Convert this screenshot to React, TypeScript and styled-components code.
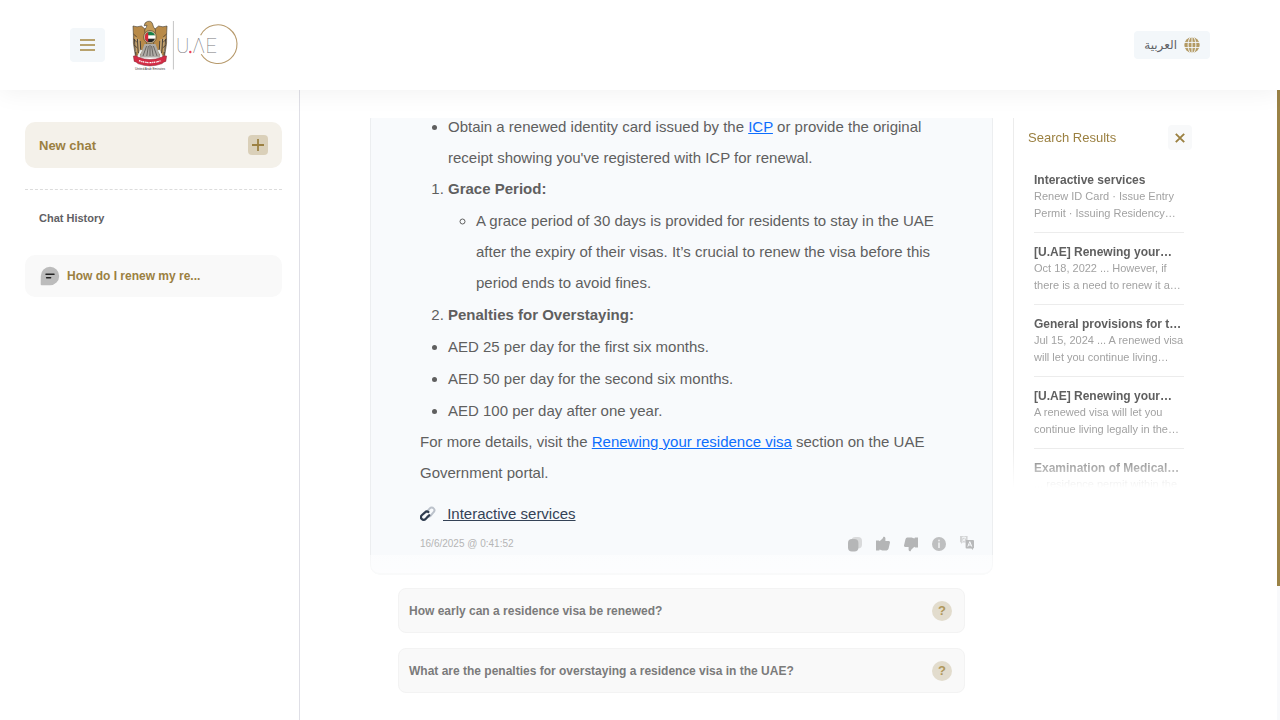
import React from 'react';
import styled, { createGlobalStyle } from 'styled-components';

const gold = '#9b8041';
const sans = '"Liberation Sans", Arial, sans-serif';

const GlobalStyle = createGlobalStyle`
  *, *::before, *::after { box-sizing: border-box; }
  body {
    margin: 0;
    background: #fff;
    color: #5f5f5f;
    font-family: ${sans};
  }
  button { font-family: inherit; border: 0; padding: 0; margin: 0; cursor: pointer; }
  svg { display: block; flex: none; }
`;

const Page = styled.div`
  display: flex;
  flex-direction: column;
  height: 100vh;
  overflow: hidden;
`;

const Header = styled.header`
  position: relative;
  z-index: 2;
  flex: none;
  display: flex;
  align-items: center;
  height: 90px;
  padding: 0 70px;
  background: #fff;
  box-shadow: 0 2px 24px rgba(0, 0, 0, 0.06);
`;

const MenuButton = styled.button`
  display: flex;
  align-items: center;
  justify-content: center;
  width: 35px;
  height: 34px;
  margin-right: 26px;
  border-radius: 4px;
  background: #f3f7fa;
`;

const LogoLink = styled.a`
  display: block;
  margin-right: auto;
`;

const LanguageButton = styled.button`
  display: flex;
  align-items: center;
  gap: 7px;
  height: 28px;
  padding: 0 10px;
  border-radius: 4px;
  background: #f3f7fa;
  color: #5f6367;
  font-family: "DejaVu Sans", sans-serif;
  font-size: 12px;
  font-weight: 400;
  line-height: 16px;
`;

const Body = styled.div`
  flex: 1;
  display: flex;
  min-height: 0;
`;

const Sidebar = styled.aside`
  flex: none;
  width: 300px;
  padding: 32px 17px 0 25px;
  border-right: 1px solid #dfdfe6;
`;

const NewChat = styled.button`
  display: flex;
  align-items: center;
  justify-content: space-between;
  width: 100%;
  height: 46px;
  padding: 0 14px;
  border-radius: 10px;
  background: #f4f1ea;
  color: ${gold};
  font-size: 13px;
  font-weight: 700;
`;

const Divider = styled.hr`
  margin: 21px 0;
  border: 0;
  border-top: 1px dashed #dcdcdc;
`;

const HistoryTitle = styled.h2`
  margin: 0 0 30px;
  padding-left: 14px;
  color: #5f6064;
  font-size: 11px;
  line-height: 14px;
  font-weight: 700;
`;

const HistoryItem = styled.button`
  display: flex;
  align-items: center;
  gap: 7px;
  width: 100%;
  height: 42px;
  padding: 0 15px;
  border-radius: 10px;
  background: #f9f9f9;
  color: ${gold};
  font-size: 12px;
  font-weight: 700;
`;

const Main = styled.main`
  flex: 1;
  display: flex;
  gap: 20px;
  min-width: 0;
  padding: 28px 84px 27px 70px;
`;

const ChatColumn = styled.div`
  flex: 1;
  display: flex;
  flex-direction: column;
  min-width: 0;
`;

const Scroller = styled.div`
  position: relative;
  flex: 1;
  display: flex;
  flex-direction: column;
  justify-content: flex-end;
  min-height: 0;
  overflow: hidden;
  border-radius: 0 0 10px 10px;

  &::after {
    content: "";
    position: absolute;
    inset: auto 0 0;
    height: 20px;
    background: linear-gradient(rgba(255, 255, 255, 0.5), rgba(255, 255, 255, 0.7));
  }
`;

const Answer = styled.article`
  padding: 0 17px 18px 49px;
  border: 1px solid #eceef0;
  border-bottom-width: 2px;
  border-radius: 10px;
  background: #f8fafc;
  font-size: 15px;
  line-height: 31px;

  ul, ol { margin: 0 26px 0 0; padding-left: 28px; }
  ol { margin-bottom: 1px; }
  li + li { margin-top: 1px; }
  li > ul { margin: 1px 0 0; }
  p { margin: 0 26px 0 0; }
`;

const InlineLink = styled.a`
  color: #0d6efd;
  text-decoration: underline;
`;

const ServiceRow = styled.div`
  display: flex;
  align-items: center;
  gap: 7px;
  height: 32px;
  margin-top: 9px;
`;

const ServiceLink = styled.a`
  color: #344256;
  white-space: pre;
  text-decoration: underline;
`;

const AnswerFooter = styled.footer`
  display: flex;
  align-items: center;
  justify-content: space-between;
  height: 22px;
  margin-top: 4px;
`;

const Timestamp = styled.time`
  color: #b5b5b5;
  font-size: 10px;
  line-height: 12px;
`;

const Actions = styled.div`
  display: flex;
  gap: 12px;
`;

const ActionButton = styled.button`
  width: 16px;
  height: 16px;
  background: none;
`;

const Suggestions = styled.div`
  flex: none;
  display: grid;
  gap: 15px;
  margin: 13px 28px 0;
`;

const Suggestion = styled.button`
  display: flex;
  align-items: center;
  justify-content: space-between;
  height: 45px;
  padding: 0 12px 0 10px;
  border: 1px solid #f3f3f3;
  border-radius: 8px;
  background: #f9f9f9;
  color: #7b7b7b;
  font-size: 12px;
  font-weight: 700;
  text-align: left;
`;

const QuestionMark = styled.span`
  display: flex;
  align-items: center;
  justify-content: center;
  width: 20px;
  height: 20px;
  border-radius: 50%;
  background: #e2dccd;
  color: #b0985b;
  font-size: 13px;
`;

const Results = styled.aside`
  flex: none;
  width: 180px;
  height: 370px;
  overflow: hidden;
  padding: 7px 1px 0 14px;
  border-left: 1px solid #ececec;
  mask-image: linear-gradient(#000 calc(100% - 40px), transparent);
`;

const ResultsHeader = styled.div`
  display: flex;
  align-items: center;
  justify-content: space-between;
  margin-bottom: 11px;
`;

const ResultsTitle = styled.h2`
  margin: 0;
  color: ${gold};
  font-size: 13px;
  line-height: 16px;
  font-weight: 400;
`;

const CloseButton = styled.button`
  display: flex;
  align-items: center;
  justify-content: center;
  width: 24px;
  height: 25px;
  border-radius: 4px;
  background: #f8f9fa;
`;

const ResultList = styled.ul`
  margin: 0 8px 0 6px;
  padding: 0;
  list-style: none;
`;

const Result = styled.li`
  padding: 11px 0 10px;
  border-bottom: 1px solid #ececec;
`;

const ResultLink = styled.a`
  display: block;
  color: #5f5f5f;
  font-size: 12px;
  line-height: 16px;
  font-weight: 700;
  text-decoration: none;
  white-space: nowrap;
`;

const ResultText = styled.p`
  margin: 0;
  color: #a2a2a2;
  font-size: 11px;
  line-height: 17px;
`;

const ScrollTrack = styled.div`
  flex: none;
  width: 3px;
  background: #f8f9fb;
`;

const ScrollThumb = styled.div`
  height: calc(79% - 2px);
  background: #9a8245;
`;

const MenuIcon = () => (
  <svg width="15" height="12" viewBox="0 0 15 12" aria-hidden="true">
    <path d="M0 1h15M0 6h15M0 11h15" stroke="#a5863f" strokeWidth="1.4" />
  </svg>
);

const Logo = () => (
  <svg width="108" height="52" viewBox="131 18 108 52" role="img" aria-label="UAE government portal">
    <g stroke="#3f3a33" strokeWidth="0.6" strokeLinejoin="round">
      <path d="M145 28 L141.4 25 Q137 26.6 133 25 L133.4 34 L133.4 42 L134.6 50 L135.6 56 L139 53 L141.5 56 L144 46 L150 44 L156 46 L158.5 56 L161 53 L164.4 56 L165.4 50 L166.6 42 L166.6 34 L167 25 Q163 26.6 158.6 25 L155 28 Z" fill="#b88a48" />
      <path d="M144.6 29 Q146.6 26.4 147 24.2 L144.2 24.8 Q144.4 21.2 147.6 20.4 Q151.6 19.6 152.6 23 Q153 26 155.6 29 L153 46 H147 Z" fill="#c39a58" />
    </g>
    <path d="M134.4 38l1.6 16M137.4 38l1 14M140.2 40l.8 14M165.6 38l-1.6 16M162.6 38l-1 14M159.8 40l-.8 14" stroke="#45423f" strokeWidth="1" />
    <path d="M136 36v15M164 36v15M138.8 38l.6 13M161.2 38l-.6 13" stroke="#d9c7a2" strokeWidth="0.8" />
    <path d="M133.4 33l3.4 3M133.4 38l3.4 3M134 44l3.4 3M166.6 33l-3.4 3M166.6 38l-3.4 3M166 44l-3.4 3" stroke="#463b30" strokeWidth="0.8" />
    <path d="M144.5 43h11l5 13.5h-21z" fill="#aeaba6" />
    <path d="M146.6 45l-3.6 10M150 44v11M153.4 45l3.6 10M148.4 45l-1.6 10M151.6 45l1.6 10" stroke="#4a4845" strokeWidth="0.7" />
    <path d="M141.4 49l-3 6M158.6 49l3 6" stroke="#eef4f4" strokeWidth="1.8" />
    <circle cx="150" cy="36" r="6.4" fill="#d6c7a4" stroke="#54442b" strokeWidth="0.7" />
    <clipPath id="shield"><circle cx="150" cy="36" r="5.2" /></clipPath>
    <g clipPath="url(#shield)">
      <path d="M144 30h12v4.4h-12z" fill="#15804a" />
      <path d="M144 34.4h12v3.4h-12z" fill="#fff" />
      <path d="M144 37.8h12v4h-12z" fill="#252525" />
      <path d="M144 30h4.2v12H144z" fill="#d52b3a" />
    </g>
    <path d="M133.4 55q3.2-.8 5 1.2 11.6 4.6 23.2 0 1.8-2 5-1.2l-.8 5.4q-2.6.2-3.6 2.2-12.2 4.6-24.4 0-1-2-3.6-2.2z" fill="#d42c46" stroke="#7c2531" strokeWidth="0.5" />
    <path d="M139 59.6q11 4 22 0" fill="none" stroke="#fff" strokeWidth="1.3" strokeDasharray="1.6 .7 .9 .5" />
    <text x="150" y="69" textAnchor="middle" fontFamily="Liberation Sans" fontSize="3.2" fill="#3f3c39">United Arab Emirates</text>
    <path d="M173.4 20v48.5" stroke="#c4c4c4" strokeWidth="1" />
    <path d="M200.6 34.2A19.3 19.3 0 1 1 201.2 53.2" fill="none" stroke="#b79a6c" strokeWidth="1.1" />
    <g fontFamily="Roboto, Lato, sans-serif" fontWeight="100" fontSize="20" fill="#77777b">
      <text x="176" y="52">U</text>
      <text x="192.3" y="52">Λ</text>
      <text x="205.4" y="52">E</text>
    </g>
    <circle cx="190.3" cy="51" r="1.2" fill="#ec3d5a" />
  </svg>
);

const GlobeIcon = () => (
  <svg width="16" height="16" viewBox="0 0 16 16" aria-hidden="true">
    <circle cx="8" cy="8" r="7.7" fill="#b39a63" />
    <g fill="none" stroke="#f3f7fa" strokeWidth="1">
      <path d="M0 5.4h16M0 10.6h16M8 0v16" />
      <ellipse cx="8" cy="8" rx="3.9" ry="8.4" />
    </g>
  </svg>
);

const PlusIcon = () => (
  <svg width="20" height="20" viewBox="0 0 20 20" aria-hidden="true">
    <rect width="20" height="20" rx="4" fill="#dad0b9" />
    <path d="M10 4v12M4 10h12" stroke="#9b8041" strokeWidth="1.8" />
  </svg>
);

const ChatIcon = () => (
  <svg width="20" height="20" viewBox="0 0 20 20" aria-hidden="true">
    <path d="M10 .8a9.2 9.2 0 1 1 0 18.4H1.6q-1 0-.9-1L.8 10A9.2 9.2 0 0 1 10 .8z" fill="#bcbcbc" />
    <path d="M6 8.2h8M6.6 11.8h4" stroke="#232323" strokeWidth="1.5" strokeLinecap="round" />
  </svg>
);

const ChainIcon = () => (
  <svg width="16" height="16" viewBox="0 -1 16 16" fill="none" strokeLinecap="round" aria-hidden="true">
    <path d="M6.4 6.2l3.4-3.8a2.6 2.6 0 0 1 3.8 0 2.7 2.7 0 0 1 0 3.8L10.4 10a2.6 2.6 0 0 1-3 .4" stroke="#bcc2cb" strokeWidth="2" />
    <path d="M9.2 9.2l-3.6 3.8a2.6 2.6 0 0 1-3.8 0 2.7 2.7 0 0 1 0-3.8L5 6.4a2.6 2.6 0 0 1 3.4-.4" stroke="#303d50" strokeWidth="2.2" />
  </svg>
);

const CopyIcon = () => (
  <svg width="16" height="16" viewBox="0 0 16 16" aria-hidden="true">
    <rect x="4.4" y="1" width="10.6" height="11.6" rx="4" fill="#d9dadb" />
    <rect x="1" y="3" width="10.4" height="12.6" rx="4" fill="#b5b6b7" />
  </svg>
);

const ThumbIcon = ({ down = false }: { down?: boolean }) => (
  <svg width="16" height="16" viewBox="0 0 16 16" aria-hidden="true">
    <path
      transform={down ? 'rotate(180 8 8)' : undefined}
      d="M1 4.4h2.6q.8 0 1 .8l3-2.8.8-1.6q1.6-.4 2 1.2v3h3.4q1.4.2 1.2 1.6l-1.4 6q-.4 1.8-2 1.8H7.4L4.6 13.4q-.2 1.2-1 1.2H1z"
      fill="#b4b5b6"
    />
  </svg>
);

const InfoIcon = () => (
  <svg width="16" height="16" viewBox="0 0 16 16" aria-hidden="true">
    <circle cx="8" cy="8" r="7" fill="#bebfc0" />
    <path d="M8 6.6v5.4" stroke="#e9eaeb" strokeWidth="1.8" />
    <circle cx="8" cy="4.6" r="1" fill="#e9eaeb" />
  </svg>
);

const TranslateIcon = () => (
  <svg width="16" height="16" viewBox="1 0 16 16" aria-hidden="true">
    <path d="M3 -1h5.6q1 0 1 1v6.6H4.4L3 8V6.6q-1 0-1-1V0q0-1 1-1z" fill="#d3d4d5" />
    <path d="M4 1.4h4M6 .4v1M7.6 1.4q-.8 3-3.6 4M4.6 2.6q1 2 3 2.8" fill="none" stroke="#f8fafc" strokeWidth="0.8" />
    <path d="M8.600 4h6.400q1 0 1 1v6.400q0 1-1 1v1.600l-1.600-1.600H8.600q-1 0-1-1V5q0-1 1-1z" fill="#b8b9ba" />
    <path d="M9.800 10.600l2-5 2 5M10.500 9h2.600" fill="none" stroke="#f8fafc" strokeWidth="1" />
  </svg>
);

const CloseIcon = () => (
  <svg width="10" height="10" viewBox="0 0 10 10" aria-hidden="true">
    <path d="M.8 .8l8.400 8.400M9.200 .8L.8 9.200" stroke="#9b8041" strokeWidth="1.900" />
  </svg>
);

const results = [
  { title: 'Interactive services', text: 'Renew ID Card · Issue Entry Permit · Issuing Residency…' },
  { title: '[U.AE] Renewing your…', text: 'Oct 18, 2022 ... However, if there is a need to renew it a…' },
  { title: 'General provisions for t…', text: 'Jul 15, 2024 ... A renewed visa will let you continue living…' },
  { title: '[U.AE] Renewing your…', text: 'A renewed visa will let you continue living legally in the…' },
  { title: 'Examination of Medical…', text: '... residence permit within the' },
];

const suggestions = [
  'How early can a residence visa be renewed?',
  'What are the penalties for overstaying a residence visa in the UAE?',
];

export default function App() {
  return (
    <Page>
      <GlobalStyle />
      <Header>
        <MenuButton aria-label="Menu"><MenuIcon /></MenuButton>
        <LogoLink href="#" aria-label="Home"><Logo /></LogoLink>
        <LanguageButton>
          <span lang="ar">العربية</span>
          <GlobeIcon />
        </LanguageButton>
      </Header>
      <Body>
        <Sidebar>
          <NewChat>New chat<PlusIcon /></NewChat>
          <Divider />
          <HistoryTitle>Chat History</HistoryTitle>
          <HistoryItem><ChatIcon />How do I renew my re...</HistoryItem>
        </Sidebar>
        <Main>
          <ChatColumn>
            <Scroller>
              <Answer>
                <ul>
                  <li>
                    Obtain a renewed identity card issued by the <InlineLink href="#">ICP</InlineLink> or
                    provide the original receipt showing you've registered with ICP for renewal.
                  </li>
                </ul>
                <ol>
                  <li>
                    <strong>Grace Period:</strong>
                    <ul>
                      <li>
                        A grace period of 30 days is provided for residents to stay in the UAE after
                        the expiry of their visas. It’s crucial to renew the visa before this period
                        ends to avoid fines.
                      </li>
                    </ul>
                  </li>
                  <li><strong>Penalties for Overstaying:</strong></li>
                </ol>
                <ul>
                  <li>AED 25 per day for the first six months.</li>
                  <li>AED 50 per day for the second six months.</li>
                  <li>AED 100 per day after one year.</li>
                </ul>
                <p>
                  For more details, visit the{' '}
                  <InlineLink href="#">Renewing your residence visa</InlineLink> section on the UAE
                  Government portal.
                </p>
                <ServiceRow>
                  <ChainIcon />
                  <ServiceLink href="#"> Interactive services</ServiceLink>
                </ServiceRow>
                <AnswerFooter>
                  <Timestamp>16/6/2025 @ 0:41:52</Timestamp>
                  <Actions>
                    <ActionButton aria-label="Copy"><CopyIcon /></ActionButton>
                    <ActionButton aria-label="Like"><ThumbIcon /></ActionButton>
                    <ActionButton aria-label="Dislike"><ThumbIcon down /></ActionButton>
                    <ActionButton aria-label="Information"><InfoIcon /></ActionButton>
                    <ActionButton aria-label="Translate"><TranslateIcon /></ActionButton>
                  </Actions>
                </AnswerFooter>
              </Answer>
            </Scroller>
            <Suggestions>
              {suggestions.map((text) => (
                <Suggestion key={text}>
                  {text}
                  <QuestionMark>?</QuestionMark>
                </Suggestion>
              ))}
            </Suggestions>
          </ChatColumn>
          <Results>
            <ResultsHeader>
              <ResultsTitle>Search Results</ResultsTitle>
              <CloseButton aria-label="Close search results"><CloseIcon /></CloseButton>
            </ResultsHeader>
            <ResultList>
              {results.map(({ title, text }, index) => (
                <Result key={index}>
                  <ResultLink href="#">{title}</ResultLink>
                  <ResultText>{text}</ResultText>
                </Result>
              ))}
            </ResultList>
          </Results>
        </Main>
        <ScrollTrack><ScrollThumb /></ScrollTrack>
      </Body>
    </Page>
  );
}
